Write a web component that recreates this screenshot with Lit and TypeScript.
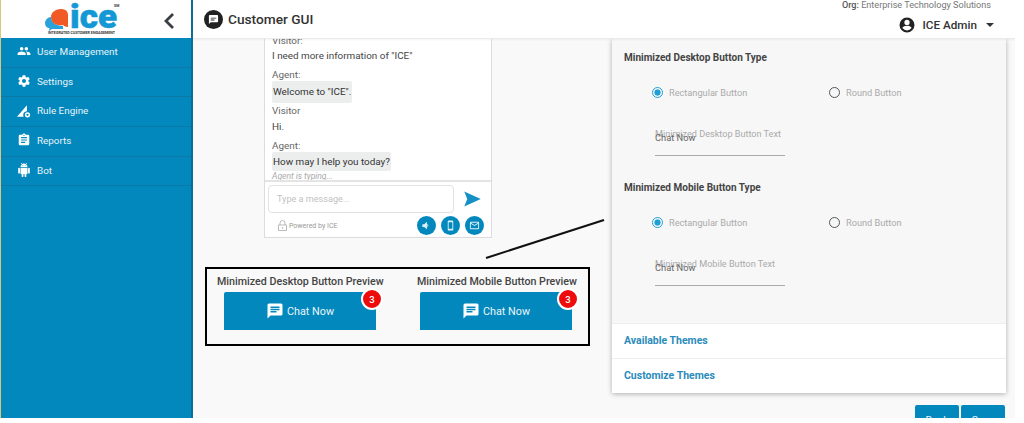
import { LitElement, html, css, svg } from "lit";
import { customElement } from "lit/decorators.js";

const navIcons = {
  users: svg`<path d="M16 11c1.66 0 3-1.34 3-3s-1.34-3-3-3-3 1.34-3 3 1.34 3 3 3zm-8 0c1.66 0 3-1.34 3-3S9.66 5 8 5 5 6.34 5 8s1.34 3 3 3zm0 2c-2.33 0-7 1.17-7 3.5V19h14v-2.5C15 14.17 10.33 13 8 13zm8 0c-.29 0-.62.02-.97.05C16.19 13.89 17 15 17 16.5V19h6v-2.5c0-2.33-4.67-3.5-7-3.5z"/>`,
  gear: svg`<path d="M19.4 13c.04-.32.1-.66.1-1s-.06-.68-.1-1l2.1-1.65c.2-.15.25-.42.12-.64l-2-3.46c-.12-.22-.39-.3-.61-.22l-2.49 1c-.52-.4-1.08-.73-1.69-.98l-.38-2.65A.5.5 0 0 0 14 2h-4a.5.5 0 0 0-.49.42l-.38 2.65c-.61.25-1.17.59-1.69.98l-2.49-1c-.23-.09-.49 0-.61.22l-2 3.46c-.13.22-.07.49.12.64L4.56 11c-.04.32-.06.66-.06 1s.02.68.06 1l-2.1 1.65c-.2.15-.25.42-.12.64l2 3.46c.12.22.39.3.61.22l2.49-1c.52.4 1.08.73 1.69.98l.38 2.65c.03.24.24.42.49.42h4c.25 0 .46-.18.49-.42l.38-2.65c.61-.25 1.17-.59 1.69-.98l2.49 1c.23.09.49 0 .61-.22l2-3.46c.12-.22.07-.49-.12-.64L19.4 13zM12 15.5a3.5 3.5 0 1 1 0-7 3.5 3.5 0 0 1 0 7z"/>`,
  rule: svg`<path d="M0 22 17 2v10.3a6.5 6.5 0 0 0-5.6 9.7H0z"/><circle cx="18" cy="18.5" r="3.2" fill="none" stroke="#fff" stroke-width="2.6"/>`,
  report: svg`<path d="M19 3h-4.18C14.4 1.84 13.3 1 12 1s-2.4.84-2.82 2H5a2 2 0 0 0-2 2v14a2 2 0 0 0 2 2h14a2 2 0 0 0 2-2V5a2 2 0 0 0-2-2zm-7 0a1 1 0 1 1 0 2 1 1 0 0 1 0-2zm2 14H7v-2h7v2zm3-4H7v-2h10v2zm0-4H7V7h10v2z"/>`,
  bot: svg`<path d="M6 18c0 .55.45 1 1 1h1v3.5a1.5 1.5 0 0 0 3 0V19h2v3.5a1.5 1.5 0 0 0 3 0V19h1c.55 0 1-.45 1-1V8H6v10zM3.5 8A1.5 1.5 0 0 0 2 9.5v7a1.5 1.5 0 0 0 3 0v-7A1.5 1.5 0 0 0 3.5 8zm17 0a1.5 1.5 0 0 0-1.5 1.5v7a1.5 1.5 0 0 0 3 0v-7A1.5 1.5 0 0 0 20.5 8zm-4.97-5.84 1.3-1.3a.5.5 0 0 0-.7-.7l-1.48 1.48A5.8 5.8 0 0 0 12 1c-.96 0-1.86.23-2.66.63L7.85.15a.5.5 0 0 0-.7.7l1.31 1.31A5.98 5.98 0 0 0 6 7h12a5.98 5.98 0 0 0-2.47-4.84zM10 5H9V4h1v1zm5 0h-1V4h1v1z"/>`,
};

const chatIcon = svg`<path d="M20 2H4a2 2 0 0 0-2 2v18l4-4h14a2 2 0 0 0 2-2V4a2 2 0 0 0-2-2zM6 9h12v2H6V9zm8 5H6v-2h8v2zm4-6H6V6h12v2z"/>`;

@customElement("app-root")
export class AppRoot extends LitElement {
  static styles = css`
    :host { --blue: #0288bd; display: block; width: 1024px; height: 423px; background: #fff; font-family: Roboto, "Liberation Sans", sans-serif; overflow: hidden; }
    .page { width: 1015px; height: 418px; display: grid; grid-template-columns: 193px 1fr; overflow: hidden; background: #f9f9f9; }
    .side { background: var(--blue); border-left: 1px solid #d9c77c; border-right: 2px solid #0c6e96; display: flex; flex-direction: column; }
    .brand { height: 38px; background: #fff; display: flex; align-items: center; flex: none; }
    .logo { margin-left: 43px; width: 78px; height: 34px; flex: none; }
    .back { margin-left: 41px; width: 12px; height: 18px; margin-top: 3px; }
    .nav { display: flex; flex-direction: column; }
    .nav-item { height: 29.7px; box-sizing: border-box; display: flex; align-items: center; color: #e8f4f9; font-size: 9.9px; border-bottom: 1px solid #0a79a6; padding: 0 0 2px 16px; gap: 6px; }
    .nav-item svg { width: 14px; height: 14px; fill: #fff; flex: none; }
    .main { display: flex; flex-direction: column; min-width: 0; overflow: hidden; }
    .top { height: 39px; flex: none; box-sizing: border-box; background: #fff; border-bottom: 1px solid #eaeaea; box-shadow: 0 1px 2px rgba(0,0,0,.05); display: flex; align-items: center; padding-left: 11px; position: relative; z-index: 2; }
    .top-icon { width: 19px; height: 19px; border-radius: 50%; background: #212121; display: flex; align-items: center; justify-content: center; }
    .top-icon svg { width: 11px; height: 11px; fill: #fff; }
    .title { margin-left: 5px; font-size: 13.7px; font-weight: 500; color: #333; }
    .user { margin-left: auto; display: flex; flex-direction: column; align-items: flex-end; padding-right: 21px; margin-top: -6px; }
    .org { font-size: 9.1px; color: #777; line-height: 12px; margin-right: 3px; }
    .org b { font-weight: 500; color: #555; }
    .who { display: flex; align-items: center; margin-top: 5px; font-size: 11.7px; font-weight: 500; color: #333; }
    .who svg.u { width: 18px; height: 18px; fill: #222; margin-right: 7px; }
    .caret { width: 0; height: 0; border: 4px solid transparent; border-top: 4px solid #333; border-bottom: 0; margin-left: 9px; }
    .body { flex: 1; display: flex; min-height: 0; overflow: hidden; padding-right: 9px; position: relative; }
    .left { width: 419px; flex: none; display: flex; flex-direction: column; align-items: flex-start; }
    .chat { margin-left: 71px; width: 228px; height: 199px; box-sizing: border-box; background: #fff; border: 1px solid #dcdcdc; border-top: 0; flex: none; display: flex; flex-direction: column; }
    .msgs { height: 143px; flex: none; overflow: hidden; padding: 0 7px; font-size: 9.9px; color: #444; box-sizing: border-box; border-bottom: 2px solid #e4e4e4; }
    .m { line-height: 14px; }
    .v1 { margin-top: -5px; color: #666; }
    .g1 { margin-top: 1px; }
    .g2 { margin-top: 2px; }
    .g5 { margin-top: 5px; }
    .lbl { color: #666; }
    .bub { background: #eceeee; width: fit-content; padding: 0 1px; border-radius: 2px; color: #333; margin-top: -1px; }
    .bub.tall { line-height: 22px; }
    .bub.short { line-height: 19px; }
    .typing { font-size: 8.5px; font-style: italic; color: #aaa; line-height: 10px; }
    .composer { display: flex; padding: 3px 0 0 3px; align-items: center; }
    .field { width: 186px; height: 28px; box-sizing: border-box; border: 1px solid #e2e2e2; border-radius: 4px; padding-left: 8px; font-size: 9.1px; color: #c2c2c2; display: flex; align-items: center; }
    .send { width: 19px; height: 18px; margin-left: 9px; fill: #1590c4; }
    .foot { display: flex; align-items: center; padding: 3px 7px 0 13px; }
    .foot .lock { width: 9px; height: 11px; margin-right: 2px; }
    .pw { font-size: 7px; color: #999; }
    .circles { margin-left: auto; display: flex; gap: 5px; }
    .cir { width: 19px; height: 19px; border-radius: 50%; background: var(--blue); display: flex; align-items: center; justify-content: center; }
    .cir svg { width: 11px; height: 11px; fill: #dff1f8; }
    .preview { margin: 29px 0 0 12px; width: 385px; height: 79px; box-sizing: border-box; border: 2px solid #000; display: grid; grid-template-columns: 196px 1fr; flex: none; }
    .pv { display: flex; flex-direction: column; }
    .pv h4 { margin: 0; font-size: 10.7px; font-weight: 500; color: #444; line-height: 14px; padding-top: 6px; white-space: nowrap; }
    .pv.a h4 { padding-left: 10px; }
    .pv.b h4 { padding-left: 14px; }
    .cbtn { margin-top: 3px; margin-left: 17px; width: 152px; height: 38px; background: var(--blue); border-radius: 2px 2px 0 0; color: #eaf6fb; font-size: 10.8px; display: flex; align-items: center; justify-content: center; gap: 3px; position: relative; box-sizing: border-box; }
    .cbtn svg { width: 18px; height: 18px; fill: #fff; }
    .badge { position: absolute; right: -7px; top: -4px; width: 22px; height: 22px; box-sizing: border-box; border-radius: 50%; background: #ee0b0b; border: 2px solid #fff; color: #fff; font-size: 9.5px; font-weight: 500; display: flex; align-items: center; justify-content: center; }
    .right { flex: 1; display: flex; flex-direction: column; min-width: 0; }
    .panel { width: 394px; flex: none; background: #f7f7f7; box-shadow: 0 1px 5px rgba(0,0,0,.3); }
    .sec { height: 284px; box-sizing: border-box; padding: 12px 12px 0; }
    .sec h3 { margin: 0; font-size: 10px; font-weight: 700; color: #444; line-height: 13px; }
    .sec h3.two { margin-top: 25px; }
    .radios { display: flex; padding: 21px 0 0 28px; height: 14px; }
    .r { display: flex; align-items: center; font-size: 9.2px; color: #aaa; }
    .r.one { width: 177px; }
    .dot { width: 11px; height: 11px; box-sizing: border-box; border-radius: 50%; border: 1.6px solid #555; margin-right: 6px; background: #f7f7f7; flex: none; }
    .dot.on { border-color: #1e9fd6; background: radial-gradient(circle, #1e9fd6 0 2.8px, #f7f7f7 3.4px); }
    .inp { margin: 28px 0 0 31px; width: 130px; height: 29px; box-sizing: border-box; border-bottom: 1px solid #aaa; position: relative; }
    .inp .ph { position: absolute; left: 0; top: 1px; font-size: 9.1px; color: #aaa; white-space: nowrap; line-height: 13px; }
    .inp .val { position: absolute; left: 0; top: 4px; font-size: 9.3px; color: #666; white-space: nowrap; line-height: 13px; }
    .acc { height: 35px; box-sizing: border-box; background: #fff; border-top: 1px solid #eee; padding: 0 12px 2px; display: flex; align-items: center; font-size: 10.5px; font-weight: 700; color: #2b8cbb; }
    .btns { display: flex; gap: 2px; justify-content: flex-end; margin-top: 12px; width: 394px; padding-right: 1px; box-sizing: border-box; }
    .act { width: 44px; height: 30px; background: var(--blue); border-radius: 2px 2px 0 0; color: #eaf6fb; font-size: 10.5px; display: flex; align-items: center; justify-content: center; flex: none; }
    .line { position: absolute; left: 292px; top: 180px; width: 120px; height: 40px; pointer-events: none; }
  `;

  private nav(icon: keyof typeof navIcons, label: string) {
    return html`<div class="nav-item"><svg viewBox="0 0 24 24">${navIcons[icon]}</svg><span>${label}</span></div>`;
  }

  private btn(cls: string, title: string) {
    return html`<div class="pv ${cls}"><h4>${title}</h4>
      <div class="cbtn"><svg viewBox="0 0 24 24">${chatIcon}</svg>Chat Now<span class="badge">3</span></div></div>`;
  }

  private section(h: string, two: boolean, ph: string) {
    return html`<h3 class=${two ? "two" : ""}>${h}</h3>
      <div class="radios">
        <div class="r one"><span class="dot on"></span>Rectangular Button</div>
        <div class="r"><span class="dot"></span>Round Button</div>
      </div>
      <div class="inp"><span class="ph">${ph}</span><span class="val">Chat Now</span></div>`;
  }

  render() {
    return html`<div class="page">
      <aside class="side">
        <div class="brand">
          <svg class="logo" viewBox="0 0 78 34">
            <path d="M1 21c0-3 3-6 6-6 0 5 5 9 12 9v3H8l-3 2 .5-3C3 26 1 24 1 21z" fill="#2aa3dc"/>
            <path d="M7 15c0-5 5-8 10-8 4 0 7 2 7 6v12c-2 0-4-1-5-2-7 1-12-2-12-8z" fill="#f15a24"/>
            <text x="26" y="26" font-family="Roboto, sans-serif" font-weight="900" font-size="34" fill="#1498d5" stroke="#1498d5" stroke-width=".5" textLength="47" lengthAdjust="spacingAndGlyphs">ice</text>
            <text x="70" y="4.5" font-family="Roboto, sans-serif" font-weight="700" font-size="3.5" fill="#333">SM</text>
            <text x="4" y="32" font-family="Roboto, sans-serif" font-weight="700" font-size="2.9" fill="#333" textLength="67" lengthAdjust="spacingAndGlyphs">INTEGRATED CUSTOMER ENGAGEMENT</text>
          </svg>
          <svg class="back" viewBox="0 0 12 18"><path d="M10 2 3 9l7 7" fill="none" stroke="#3a3f45" stroke-width="2.8"/></svg>
        </div>
        <nav class="nav">
          ${this.nav("users", "User Management")}
          ${this.nav("gear", "Settings")}
          ${this.nav("rule", "Rule Engine")}
          ${this.nav("report", "Reports")}
          ${this.nav("bot", "Bot")}
        </nav>
      </aside>
      <div class="main">
        <header class="top">
          <div class="top-icon"><svg viewBox="0 0 24 24"><path d="M20 2H4a2 2 0 0 0-2 2v18l4-4h14a2 2 0 0 0 2-2V4a2 2 0 0 0-2-2zm-6 12H6v-2h8v2zm4-4H6V8h12v2z"/></svg></div>
          <div class="title">Customer GUI</div>
          <div class="user">
            <div class="org"><b>Org:</b> Enterprise Technology Solutions</div>
            <div class="who">
              <svg class="u" viewBox="0 0 24 24"><path d="M12 2a10 10 0 1 0 0 20 10 10 0 0 0 0-20zm0 3a3.5 3.5 0 1 1 0 7 3.5 3.5 0 0 1 0-7zm0 14.2a7.2 7.2 0 0 1-6-3.2c.03-2 4-3.1 6-3.1s5.97 1.1 6 3.1a7.2 7.2 0 0 1-6 3.2z"/></svg>
              ICE Admin<span class="caret"></span>
            </div>
          </div>
        </header>
        <div class="body">
          <div class="left">
            <div class="chat">
              <div class="msgs">
                <div class="m v1">Visitor:</div>
                <div class="m g1">I need more information of "ICE"</div>
                <div class="m lbl g5">Agent:</div>
                <div class="m bub tall">Welcome to "ICE".</div>
                <div class="m lbl g1">Visitor</div>
                <div class="m g2">Hi.</div>
                <div class="m lbl g5">Agent:</div>
                <div class="m bub short">How may I help you today?</div>
                <div class="typing">Agent is typing...</div>
              </div>
              <div class="composer">
                <div class="field">Type a message...</div>
                <svg class="send" viewBox="0 0 24 24"><path d="M1 2 23 12 1 22l4-10zM5 12h8"/></svg>
              </div>
              <div class="foot">
                <svg class="lock" viewBox="0 0 9 11"><path d="M2 5V3a2.5 2.5 0 0 1 5 0v2M.5 5h8v5.5h-8z" fill="none" stroke="#aaa" stroke-width=".8"/><circle cx="4.5" cy="8" r=".8" fill="#aaa"/></svg>
                <span class="pw">Powered by ICE</span>
                <div class="circles">
                  <div class="cir"><svg viewBox="0 0 24 24"><path d="M3 9v6h4l6 5V4L7 9H3zm13 3a4.5 4.5 0 0 0-2-3.7v7.4a4.5 4.5 0 0 0 2-3.7z"/></svg></div>
                  <div class="cir"><svg viewBox="0 0 24 24"><path d="M16 1H8a2 2 0 0 0-2 2v18a2 2 0 0 0 2 2h8a2 2 0 0 0 2-2V3a2 2 0 0 0-2-2zm0 18H8V5h8v14z"/></svg></div>
                  <div class="cir"><svg viewBox="0 0 24 24"><path d="M20 4H4a2 2 0 0 0-2 2v12a2 2 0 0 0 2 2h16a2 2 0 0 0 2-2V6a2 2 0 0 0-2-2zm0 14H4V8l8 5 8-5v10zm-8-7L4 6h16l-8 5z"/></svg></div>
                </div>
              </div>
            </div>
            <div class="preview">
              ${this.btn("a", "Minimized Desktop Button Preview")}
              ${this.btn("b", "Minimized Mobile Button Preview")}
            </div>
          </div>
          <div class="right">
            <div class="panel">
              <div class="sec">
                ${this.section("Minimized Desktop Button Type", false, "Minimized Desktop Button Text")}
                ${this.section("Minimized Mobile Button Type", true, "Minimized Mobile Button Text")}
              </div>
              <div class="acc">Available Themes</div>
              <div class="acc">Customize Themes</div>
            </div>
            <div class="btns"><div class="act">Back</div><div class="act">Save</div></div>
          </div>
          <svg class="line" viewBox="0 0 120 40"><path d="M1 39 119 1" stroke="#111" stroke-width="2"/></svg>
        </div>
      </div>
    </div>`;
  }
}
